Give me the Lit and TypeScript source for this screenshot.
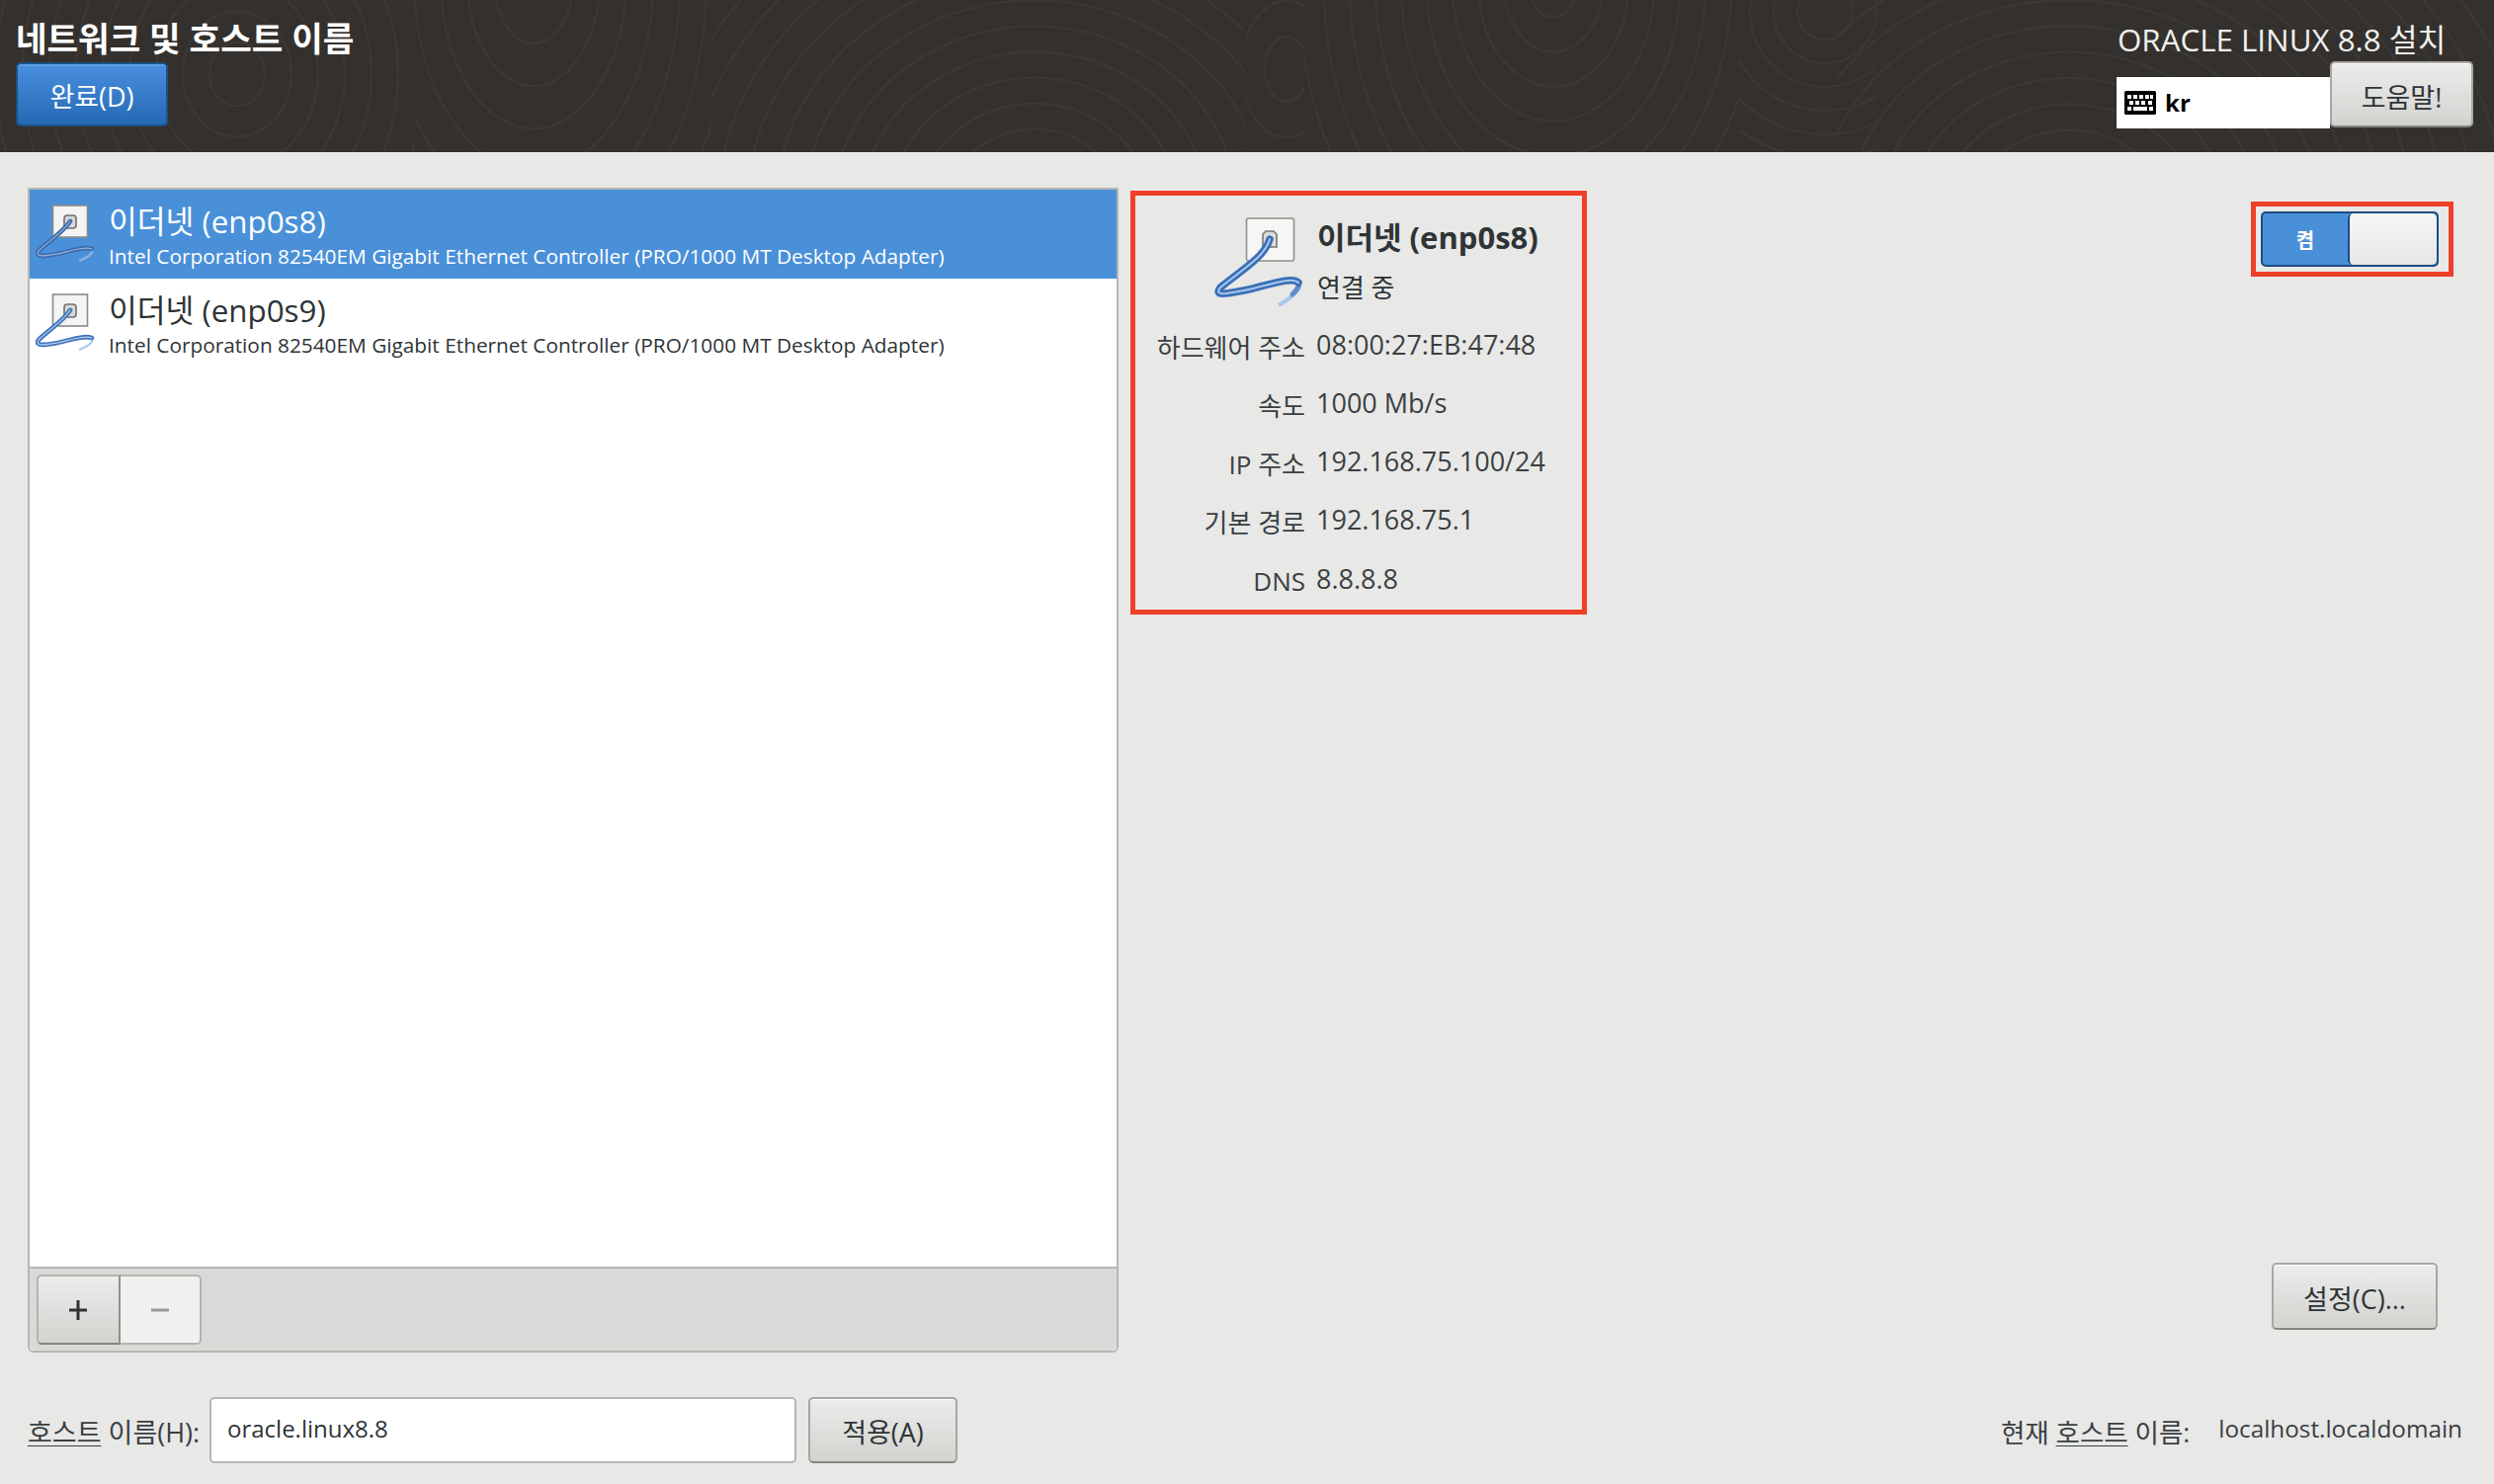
import { LitElement, html, css, svg } from "lit";
import { customElement } from "lit/decorators.js";

type Swirl = { cx: number; cy: number; x: number; w: number; start: number; step: number; n: number; ry: number };

const swirls: Swirl[] = [
  { cx: 240, cy: 75, x: 0, w: 420, start: 28, step: 27, n: 16, ry: 1.15 },
  { cx: 540, cy: -20, x: 420, w: 300, start: 40, step: 27, n: 12, ry: 1.6 },
  { cx: 1047, cy: 210, x: 720, w: 540, start: 30, step: 29, n: 14, ry: 0.9 },
  { cx: 1302, cy: 70, x: 1260, w: 60, start: 22, step: 24, n: 8, ry: 1.5 },
  { cx: 1572, cy: -15, x: 1320, w: 440, start: 24, step: 26, n: 14, ry: 1.35 },
  { cx: 1847, cy: 12, x: 1760, w: 140, start: 28, step: 24, n: 10, ry: 1.0 },
  { cx: 2094, cy: 215, x: 1860, w: 664, start: 36, step: 31, n: 16, ry: 0.85 },
];

function texture() {
  return html`<svg class="texture" width="2524" height="154" viewBox="0 0 2524 154" aria-hidden="true">
    <defs>
      ${swirls.map(
        (s, i) => svg`<clipPath id=${"c" + i}><rect x=${s.x} y="0" width=${s.w} height="154"></rect></clipPath>`
      )}
    </defs>
    ${swirls.map(
      (s, i) => svg`<g clip-path=${"url(#c" + i + ")"} fill="none" stroke="#3b3834" stroke-width="2.4">
        ${Array.from({ length: s.n }, (_, k) => {
          const r = s.start + k * s.step;
          return svg`<ellipse cx=${s.cx} cy=${s.cy} rx=${r} ry=${r * s.ry}></ellipse>`;
        })}
      </g>`
    )}
  </svg>`;
}

function bigIcon() {
  const d = "M57 22C52 40 30 52 7 71C0 80 12 78 40 72C60 67 80 60 86 66";
  return html`<svg class="bigicon" width="92" height="90" viewBox="0 0 92 90" aria-hidden="true">
    <rect x="33.5" y="1" width="48" height="43" rx="2" fill="#f6f6f5" stroke="#8f8f8c" stroke-width="1.6"></rect>
    <path d="M50 30V17l3-3h8l3 3v13z" fill="#dcdcda" stroke="#77777a" stroke-width="1.6"></path>
    <path d="M86 66C88 74 78 82 66 89" fill="none" stroke="#a9c8ea" stroke-width="4"></path>
    <path d="M86 66C88 70 84 74 80 78" fill="none" stroke="#5f8fca" stroke-width="5" stroke-linecap="round"></path>
    <path d=${d} fill="none" stroke="#3a6fb8" stroke-width="7.5" stroke-linecap="round"></path>
    <path d=${d} fill="none" stroke="#a9c8ea" stroke-width="2" stroke-linecap="round"></path>
  </svg>`;
}

function rowIcon(selected: boolean) {
  const c = selected ? "#3f6cab" : "#3f74bd";
  const h = selected ? "#8fb2dc" : "#b4cdeb";
  const d = "M35 17C28 28 12 38 3 47C-1 54 10 52 22 50C36 47 50 42 57 45";
  return html`<svg class="rowicon" width="60" height="58" viewBox="0 0 60 58" aria-hidden="true">
    <rect x="17.5" y="1" width="35" height="32" fill="#f4f4f3" stroke="#8a8a88" stroke-width="1.6"></rect>
    <rect x="29" y="11" width="12" height="13" rx="3" fill="#d8d8d6" stroke="#6f6f72" stroke-width="1.6"></rect>
    <path d="M57 45C59 50 52 54 44 57" fill="none" stroke=${h} stroke-width="2.4"></path>
    <path d=${d} fill="none" stroke=${c} stroke-width="4.6" stroke-linecap="round"></path>
    <path d=${d} fill="none" stroke=${h} stroke-width="1.2" stroke-linecap="round"></path>
  </svg>`;
}

function keyboardIcon() {
  const keys: [number, number, number][] = [
    [3, 4, 4], [9, 4, 4], [15, 4, 4], [21, 4, 4], [26, 4, 3],
    [5, 10, 4], [11, 10, 4], [17, 10, 4], [24, 10, 4],
    [3, 16, 4], [9, 16, 14], [25, 16, 4],
  ];
  return html`<svg class="kbd" width="32" height="24" viewBox="0 0 32 24" aria-hidden="true">
    <rect width="32" height="24" rx="1.5" fill="#000"></rect>
    ${keys.map(([x, y, w]) => svg`<rect x=${x} y=${y} width=${w} height="4" fill="#fff"></rect>`)}
  </svg>`;
}

const device = { name: "이더넷", desc: "Intel Corporation 82540EM Gigabit Ethernet Controller (PRO/1000 MT Desktop Adapter)" };
const rows = [
  ["하드웨어 주소", "08:00:27:EB:47:48"],
  ["속도", "1000 Mb/s"],
  ["IP 주소", "192.168.75.100/24"],
  ["기본 경로", "192.168.75.1"],
  ["DNS", "8.8.8.8"],
];

@customElement("app-root")
export class AppRoot extends LitElement {
  static styles = css`
    :host {
      display: block;
      width: 2524px;
      height: 1502px;
      background: #e8e8e7;
      color: #2e3436;
      font-family: "Open Sans", "Noto Sans CJK KR", sans-serif;
      font-size: 26px;
      overflow: hidden;
    }
    .page { display: flex; flex-direction: column; height: 1502px; }

    /* header */
    .header {
      position: relative;
      flex: none;
      height: 154px;
      background: #33302d;
      display: flex;
      justify-content: space-between;
      padding: 0 21px 0 16px;
      box-sizing: border-box;
    }
    .texture { position: absolute; left: 0; top: 0; }
    .hleft, .hright { position: relative; display: flex; flex-direction: column; }
    .title {
      height: 63px;
      line-height: 78px;
      font-size: 34.3px;
      font-weight: 700;
      color: #fff;
      white-space: nowrap;
    }
    .btn {
      box-sizing: border-box;
      display: flex;
      align-items: center;
      justify-content: center;
      padding-top: 2px;
      border: 2px solid #a6a6a2;
      border-bottom-color: #858580;
      border-radius: 5px;
      background: linear-gradient(#ececeb, #d2d2cf);
      box-shadow: inset 0 1px 0 #fff;
      color: #2e3436;
      font-size: 27px;
      white-space: nowrap;
    }
    .done {
      width: 154px;
      height: 65px;
      border-color: #1c5187;
      background: linear-gradient(#4a90df, #2568b3);
      box-shadow: inset 0 2px 0 #5fa0e6;
      color: #fff;
    }
    .hright { width: 361px; }
    .product {
      height: 62px;
      line-height: 80px;
      color: #f0f0ee;
      font-size: 31.3px;
      white-space: nowrap;
      padding-left: 1px;
    }
    .kbrow { display: flex; align-items: flex-start; }
    .kbbox {
      width: 216px;
      height: 52px;
      margin-top: 16px;
      background: #fff;
      display: flex;
      align-items: center;
      gap: 9px;
      padding-left: 8px;
      box-sizing: border-box;
      color: #000;
      font-weight: 700;
      font-size: 24px;
    }
    .kbbox span { margin-top: -2px; }
    .help { width: 145px; height: 67px; padding-top: 4px; }

    /* main */
    .main {
      flex: none;
      height: 1179px;
      margin-top: 36px;
      padding: 0 41px 0 28px;
      display: flex;
      gap: 12px;
    }
    .panel {
      flex: none;
      width: 1104px;
      box-sizing: border-box;
      border: 2px solid #b6b6b3;
      border-radius: 0 0 6px 6px;
      background: #fff;
      display: flex;
      flex-direction: column;
    }
    .rows { flex: 1; }
    .row { height: 90px; display: flex; padding: 11px 0 0 6px; box-sizing: border-box; gap: 14px; }
    .row.sel { background: #4a90d9; color: #fff; }
    .rowicon { flex: none; margin-top: 4px; }
    .rowtext { white-space: nowrap; }
    .rowname { font-size: 31.3px; line-height: 42px; }
    .rowdesc { font-size: 20.8px; line-height: 28px; }
    .bar {
      flex: none;
      height: 85px;
      background: #d9d9d7;
      border-top: 2px solid #b6b6b3;
      border-radius: 0 0 5px 5px;
      box-sizing: border-box;
      padding-top: 6px;
      padding-left: 7px;
    }
    .seg { display: flex; width: 167px; height: 71px; }
    .seg > div {
      box-sizing: border-box;
      flex: 1;
      display: flex;
      align-items: center;
      justify-content: center;
      border: 2px solid #b3b3b0;
    }
    .plus {
      border-radius: 5px 0 0 5px;
      border-right-color: #8f8f8b !important;
      border-bottom-color: #85857f !important;
      background: linear-gradient(#ececeb, #d2d2cf);
    }
    .minus { border-left: none !important; border-radius: 0 5px 5px 0; background: #f0f0ef; }

    .right { flex: 1; display: flex; flex-direction: column; align-items: stretch; }
    .top { display: flex; justify-content: space-between; align-items: flex-start; }
    .detail {
      box-sizing: border-box;
      width: 462px;
      height: 429px;
      margin-top: 3px;
      border: 5px solid #ee4028;
      padding-top: 22px;
      display: grid;
      grid-template-columns: 172px 1fr;
      grid-template-rows: 88px repeat(5, 59.25px);
      column-gap: 12px;
    }
    .iconcell { justify-self: end; margin-right: 1px; }
    .dhead { white-space: nowrap; }
    .dname { font-size: 31px; font-weight: 700; line-height: 40px; }
    .dstatus { font-size: 26px; line-height: 62px; }
    .lab, .val { display: flex; align-items: center; white-space: nowrap; color: #3a3f41; }
    .lab { justify-content: flex-end; padding-top: 26px; font-size: 26px; }
    .val { padding-top: 21px; font-size: 27px; margin-left: -1px; }
    .swbox {
      box-sizing: border-box;
      width: 205px;
      height: 76px;
      margin-top: 14px;
      border: 5px solid #ee4028;
      padding: 5px;
    }
    .switch {
      box-sizing: border-box;
      width: 180px;
      height: 56px;
      border: 2px solid #1c4c80;
      border-radius: 5px;
      background: #4a90d9;
      display: flex;
      overflow: hidden;
    }
    .swon {
      width: 86px;
      display: flex;
      align-items: center;
      justify-content: center;
      color: #fff;
      font-weight: 700;
      font-size: 20px;
    }
    .swknob {
      flex: 1;
      border: 2px solid #1c4c80;
      border-width: 0 0 0 2px;
      border-radius: 5px;
      background: linear-gradient(#f6f6f5, #e6e6e4);
    }
    .config { width: 168px; height: 68px; margin: auto 16px 23px auto; }

    /* bottom */
    .bottom {
      flex: none;
      margin-top: 45px;
      height: 67px;
      padding: 0 32px 0 28px;
      display: flex;
      align-items: center;
      white-space: nowrap;
    }
    .hostlabel { width: 184px; font-size: 27px; color: #3a3f41; padding-top: 2px; }
    .entry {
      box-sizing: border-box;
      width: 594px;
      height: 67px;
      border: 2px solid #b6b6b3;
      border-radius: 5px;
      background: #fff;
      display: flex;
      align-items: center;
      padding-left: 16px;
      padding-bottom: 4px;
      font-size: 24px;
    }
    .apply { width: 151px; height: 67px; margin-left: 12px; }
    .current { margin-left: auto; font-size: 26.5px; color: #3a3f41; padding-top: 2px; }
    .currentval { margin-left: 29px; font-size: 24.3px; color: #3a3f41; padding-bottom: 4px; }
    u { text-underline-offset: 3px; text-decoration-thickness: 1px; }
  `;

  private row(iface: string, selected: boolean) {
    return html`<div class="row ${selected ? "sel" : ""}">
      ${rowIcon(selected)}
      <div class="rowtext">
        <div class="rowname">${device.name} (${iface})</div>
        <div class="rowdesc">${device.desc}</div>
      </div>
    </div>`;
  }

  render() {
    return html`<div class="page">
      <div class="header">
        ${texture()}
        <div class="hleft">
          <div class="title">네트워크 및 호스트 이름</div>
          <div class="btn done">완료(D)</div>
        </div>
        <div class="hright">
          <div class="product">ORACLE LINUX 8.8 설치</div>
          <div class="kbrow">
            <div class="kbbox">${keyboardIcon()}<span>kr</span></div>
            <div class="btn help">도움말!</div>
          </div>
        </div>
      </div>

      <div class="main">
        <div class="panel">
          <div class="rows">${this.row("enp0s8", true)}${this.row("enp0s9", false)}</div>
          <div class="bar">
            <div class="seg">
              <div class="plus">
                <svg width="20" height="20" viewBox="0 0 20 20" aria-hidden="true"><path d="M10 0v20M1 10h18" stroke="#2e3436" stroke-width="3"></path></svg>
              </div>
              <div class="minus">
                <svg width="20" height="20" viewBox="0 0 20 20" aria-hidden="true"><path d="M1 10h18" stroke="#97999a" stroke-width="3"></path></svg>
              </div>
            </div>
          </div>
        </div>
        <div class="right">
          <div class="top">
            <div class="detail">
              <div class="iconcell">${bigIcon()}</div>
              <div class="dhead">
                <div class="dname">${device.name} (enp0s8)</div>
                <div class="dstatus">연결 중</div>
              </div>
              ${rows.map(([l, v]) => html`<div class="lab">${l}</div><div class="val">${v}</div>`)}
            </div>
            <div class="swbox">
              <div class="switch"><div class="swon">켬</div><div class="swknob"></div></div>
            </div>
          </div>
          <div class="btn config">설정(C)...</div>
        </div>
      </div>

      <div class="bottom">
        <div class="hostlabel"><u>호스트</u> 이름(H):</div>
        <div class="entry">oracle.linux8.8</div>
        <div class="btn apply">적용(A)</div>
        <div class="current">현재 <u>호스트</u> 이름:</div>
        <div class="currentval">localhost.localdomain</div>
      </div>
    </div>`;
  }
}
